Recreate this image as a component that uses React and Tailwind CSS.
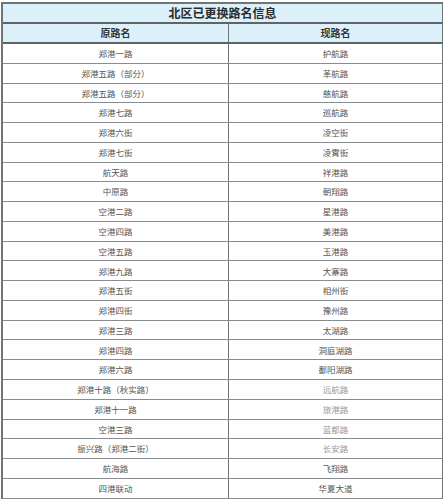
import React from "react";

const rows = [
  ["郑港一路", "护航路"],
  ["郑港五路（部分）", "革航路"],
  ["郑港五路（部分）", "慈航路"],
  ["郑港七路", "巡航路"],
  ["郑港六街", "凌空街"],
  ["郑港七街", "凌霄街"],
  ["航天路", "祥港路"],
  ["中原路", "朝翔路"],
  ["空港二路", "星港路"],
  ["空港四路", "美港路"],
  ["空港五路", "玉港路"],
  ["郑港九路", "大寨路"],
  ["郑港五街", "相州街"],
  ["郑港四街", "豫州路"],
  ["郑港三路", "太湖路"],
  ["郑港四路", "洞庭湖路"],
  ["郑港六路", "鄱阳湖路"],
  ["郑港十路（秋实路）", "远航路"],
  ["郑港十一路", "旅港路"],
  ["空港三路", "蓝都路"],
  ["振兴路（郑港二街）", "长安路"],
  ["航海路", "飞翔路"],
  ["四港联动", "华夏大道"],
];

const font = { fontFamily: '"Noto Sans CJK SC", "Noto Sans", sans-serif' };

export default function App() {
  return (
    <div className="w-[445px] h-[501px] bg-white pt-[2px] pl-[1px]" style={font}>
      <div className="w-[442px] border-t-2 border-l-2 border-r border-t-[#6f7476] border-l-[#6f7476] border-r-[#6f7476]">
        <div className="h-[20px] flex items-center justify-center bg-[#dcf0fa] border-b-2 border-[#5f6466] text-[12px] font-bold text-[#2b2b2b] leading-none">
          北区已更换路名信息
        </div>
        <div className="grid grid-cols-[226px_1fr] h-[20px] bg-[#dcf0fa] border-b-2 border-[#5f6466] text-[10px] font-bold text-[#333] leading-none">
          <div className="flex items-center justify-center border-r border-[#6f7476]">原路名</div>
          <div className="flex items-center justify-center">现路名</div>
        </div>
        {rows.map(([a, b], i) => (
          <div
            key={i}
            className="grid grid-cols-[226px_1fr] h-[19.78px] border-b border-[#8a8d8f] text-[8.5px] text-[#555] leading-none"
          >
            <div className="flex items-center justify-center border-r border-[#6f7476]">{a}</div>
            <div className={i >= 17 && i <= 20 ? "flex items-center justify-center text-[#999]" : "flex items-center justify-center"}>{b}</div>
          </div>
        ))}
      </div>
    </div>
  );
}
